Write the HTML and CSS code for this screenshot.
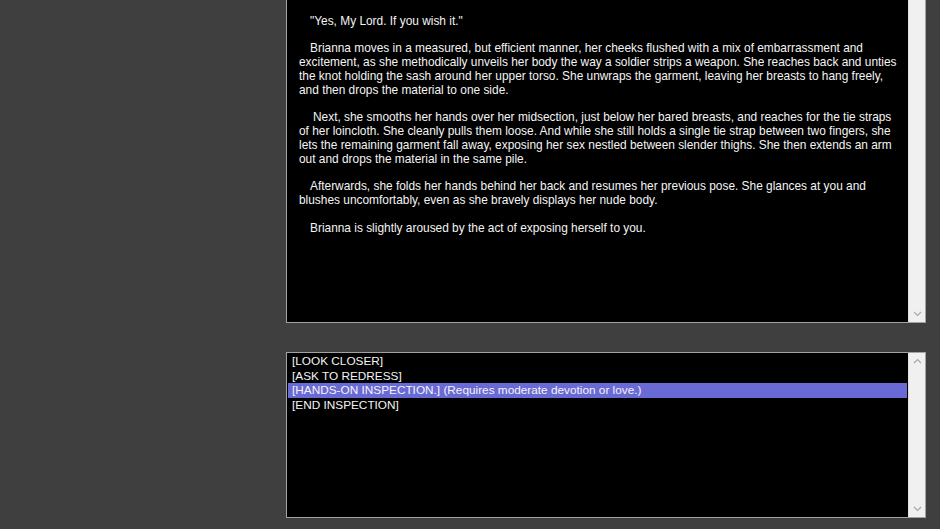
FILE: index.html
```html
<!DOCTYPE html>
<html lang="en">
<head>
    <meta charset="UTF-8">
    <title>Inspection</title>
    <link rel="stylesheet" href="styles.css">
</head>
<body>
    <div class="layout">
        <div class="side"></div>
        <div class="main">
            <div class="panel story">
                <div class="panel-body story-text">
                    <p>"Yes, My Lord. If you wish it."</p>
                    <p>Brianna moves in a measured, but efficient manner, her cheeks flushed with a mix of embarrassment and<br>excitement, as she methodically unveils her body the way a soldier strips a weapon. She reaches back and unties<br>the knot holding the sash around her upper torso. She unwraps the garment, leaving her breasts to hang freely,<br>and then drops the material to one side.</p>
                    <p class="wide-indent">Next, she smooths her hands over her midsection, just below her bared breasts, and reaches for the tie straps<br>of her loincloth. She cleanly pulls them loose. And while she still holds a single tie strap between two fingers, she<br>lets the remaining garment fall away, exposing her sex nestled between slender thighs. She then extends an arm<br>out and drops the material in the same pile.</p>
                    <p>Afterwards, she folds her hands behind her back and resumes her previous pose. She glances at you and<br>blushes uncomfortably, even as she bravely displays her nude body.</p>
                    <p>Brianna is slightly aroused by the act of exposing herself to you.</p>
                </div>
                <div class="scrollbar">
                    <span class="arrow"></span>
                    <svg class="arrow" width="9" height="6" viewBox="0 0 9 6"><path d="M1 1l3.5 3.5L8 1" fill="none" stroke="#a8a8a8" stroke-width="1.2"/></svg>
                </div>
            </div>

            <div class="panel choices">
                <ul class="panel-body choice-list">
                    <li>[LOOK CLOSER]</li>
                    <li>[ASK TO REDRESS]</li>
                    <li class="selected">[HANDS-ON INSPECTION.] (Requires moderate devotion or love.)</li>
                    <li>[END INSPECTION]</li>
                </ul>
                <div class="scrollbar">
                    <svg class="arrow" width="9" height="6" viewBox="0 0 9 6"><path d="M1 5l3.5-3.5L8 5" fill="none" stroke="#a8a8a8" stroke-width="1.2"/></svg>
                    <svg class="arrow" width="9" height="6" viewBox="0 0 9 6"><path d="M1 1l3.5 3.5L8 1" fill="none" stroke="#a8a8a8" stroke-width="1.2"/></svg>
                </div>
            </div>
        </div>
    </div>
</body>
</html>
```

FILE: styles.css
```css
body {
    margin: 0;
    background: #3f3f3f;
    font-family: 'Liberation Sans', Arial, sans-serif;
    color: #f4f4f4;
}
.layout {
    display: flex;
    height: 529px;
}
.side {
    width: 286px;
    flex-shrink: 0;
}
.main {
    width: 640px;
    display: flex;
    flex-direction: column;
    gap: 29px;
}
.panel {
    display: flex;
    background: #000;
    border: 1px solid #a3a3a3;
}
.panel-body {
    flex: 1;
    margin: 0;
}
.story {
    height: 322px;
    border-top: none;
}
.story-text {
    padding: 13.5px 4px 0 12px;
    font-size: 11.9px;
    line-height: 14px;
    white-space: nowrap;
}
.story-text p {
    margin: 0 0 13.3px 0;
    text-indent: 11px;
}
.story-text p.wide-indent {
    text-indent: 14px;
}
.choices {
    height: 164px;
}
.choice-list {
    list-style: none;
    padding: 1px 1px 0 1px;
    font-size: 11.8px;
    line-height: 14.6px;
}
.choice-list li {
    padding-left: 4px;
}
.choice-list li.selected {
    background: #6a6ad6;
}
.scrollbar {
    width: 16px;
    flex-shrink: 0;
    background: #f0f0f0;
    border-left: 1px solid #e2e2e2;
    display: flex;
    flex-direction: column;
    justify-content: space-between;
    align-items: center;
    padding: 5px 0;
}
.arrow {
    display: block;
    width: 9px;
    height: 6px;
}
```
